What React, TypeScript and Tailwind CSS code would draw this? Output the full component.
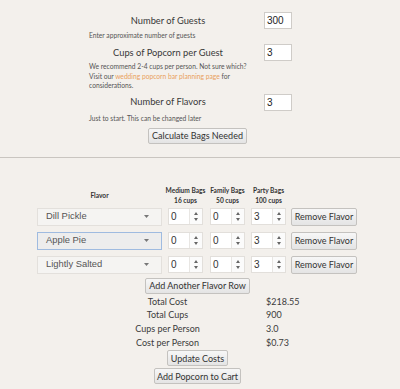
const lato = { fontFamily: "Lato, 'Open Sans', sans-serif" };
const arial = { fontFamily: "'Liberation Sans', Arial, sans-serif" };

const Btn = ({ children, className = "" }: { children: React.ReactNode; className?: string }) => (
  <button
    className={`h-[16px] px-0 text-[9px] leading-none whitespace-nowrap text-[#333] border border-[#c4c2bf] rounded-[2px] bg-gradient-to-b from-[#f7f7f7] to-[#e4e4e4] ${className}`}
  >
    {children}
  </button>
);

const NumBox = ({ value }: { value: string }) => (
  <div className="flex w-[28px] h-[17px] bg-white border border-[#cfccc8] items-center pl-[2px] text-[10px] text-[#222]" style={arial}>
    {value}
  </div>
);

const Spin = ({ value }: { value: string }) => (
  <div className="flex w-[35px] h-[17px] bg-white border border-[#e2dfdb]" style={arial}>
    <div className="flex-1 flex items-center pl-[2px] text-[10px] text-[#333]">{value}</div>
    <div className="w-[13px] flex flex-col items-center justify-center border-l border-[#e8e6e3] bg-[#fbfbfb] gap-[3px]">
      <svg width="4" height="3" viewBox="0 0 4 3"><path d="M0 3 L2 0 L4 3 Z" fill="#666" /></svg>
      <svg width="4" height="3" viewBox="0 0 4 3"><path d="M0 0 L2 3 L4 0 Z" fill="#666" /></svg>
    </div>
  </div>
);

const Select = ({ label, focused = false }: { label: string; focused?: boolean }) => (
  <div
    className={`flex items-center w-[125px] h-[18px] pl-[8px] pr-[12px] text-[9.4px] text-[#555] border ${
      focused ? "border-[#9fbbe0] bg-[#ededed]" : "border-[#e3e0dc] bg-[#f5f4f2]"
    }`}
    style={arial}
  >
    <span className="flex-1">{label}</span>
    <svg width="5" height="3" viewBox="0 0 5 3"><path d="M0 0 L2.5 3 L5 0 Z" fill="#777" /></svg>
  </div>
);

const FlavorRow = ({ name, focused }: { name: string; focused?: boolean }) => (
  <div className="flex items-center h-[18px]">
    <Select label={name} focused={focused} />
    <div className="ml-[6px]"><Spin value="0" /></div>
    <div className="ml-[7px]"><Spin value="0" /></div>
    <div className="ml-[6px]"><Spin value="3" /></div>
    <Btn className="ml-[5px] w-[66px] h-[18px] text-[9.4px]">Remove Flavor</Btn>
  </div>
);

export default function App() {
  return (
    <div className="w-[400px] h-[389px] bg-[#f3f0ec] text-[#3b3b3b] overflow-hidden" style={lato}>
      <div className="ml-[89px] w-[204px] pt-[12px]">
        <div className="flex items-center h-[17px]">
          <div className="w-[158px] text-center text-[9.3px] text-[#383838]">Number of Guests</div>
          <div className="ml-[17px]"><NumBox value="300" /></div>
        </div>
        <p className="text-[6.7px] leading-[9px] mt-[2px] text-[#555]">Enter approximate number of guests</p>
        <div className="flex items-center h-[17px] mt-[4px]">
          <div className="w-[158px] text-center text-[9.3px] text-[#383838]">Cups of Popcorn per Guest</div>
          <div className="ml-[17px]"><NumBox value="3" /></div>
        </div>
        <p className="text-[6.7px] leading-[9.5px] mt-[1px] text-[#555]">
          We recommend 2-4 cups per person. Not sure which?
          <br />
          Visit our <span className="text-[#e9a15e]">wedding popcorn bar planning page</span> for
          <br />
          considerations.
        </p>
        <div className="flex items-center h-[17px] mt-[3px]">
          <div className="w-[158px] text-center text-[9.3px] text-[#383838]">Number of Flavors</div>
          <div className="ml-[17px]"><NumBox value="3" /></div>
        </div>
        <p className="text-[6.7px] leading-[9px] mt-[3px] text-[#555]">Just to start. This can be changed later</p>
      </div>
      <div className="flex justify-center mt-[5px]">
        <Btn className="w-[99px] ml-[-5px]">Calculate Bags Needed</Btn>
      </div>
      <div className="mt-[13px] border-t border-[#c9c5c0]" />

      <div className="ml-[37px] mt-[27px]">
        <div className="flex items-center h-[20px] text-[6.6px] font-bold leading-[10px] text-[#333]">
          <div className="w-[125px] flex justify-center">Flavor</div>
          <div className="ml-[6px] w-[35px] flex flex-col items-center whitespace-nowrap">
            <span>Medium Bags</span>
            <span>16 cups</span>
          </div>
          <div className="ml-[7px] w-[35px] flex flex-col items-center whitespace-nowrap">
            <span>Family Bags</span>
            <span>50 cups</span>
          </div>
          <div className="ml-[6px] w-[35px] flex flex-col items-center whitespace-nowrap">
            <span>Party Bags</span>
            <span>100 cups</span>
          </div>
        </div>
        <div className="flex flex-col gap-[6px] mt-[3px]">
          <FlavorRow name="Dill Pickle" />
          <FlavorRow name="Apple Pie" focused />
          <FlavorRow name="Lightly Salted" />
        </div>
      </div>

      <div className="flex justify-center mt-[4px]">
        <Btn className="w-[105px] ml-[-5px]">Add Another Flavor Row</Btn>
      </div>

      <div className="ml-[117px] mt-[1px] text-[9px] text-[#3b3b3b]">
        {[
          ["Total Cost", "$218.55"],
          ["Total Cups", "900"],
          ["Cups per Person", "3.0"],
          ["Cost per Person", "$0.73"],
        ].map(([l, v]) => (
          <div key={l} className="flex h-[13.7px] items-center">
            <div className="w-[101px] text-center">{l}</div>
            <div className="ml-[48px]">{v}</div>
          </div>
        ))}
      </div>

      <div className="flex flex-col items-center gap-[2px] mt-[1px]">
        <Btn className="w-[61px] ml-[-5px]">Update Costs</Btn>
        <Btn className="w-[87px] ml-[-5px]">Add Popcorn to Cart</Btn>
      </div>
    </div>
  );
}
